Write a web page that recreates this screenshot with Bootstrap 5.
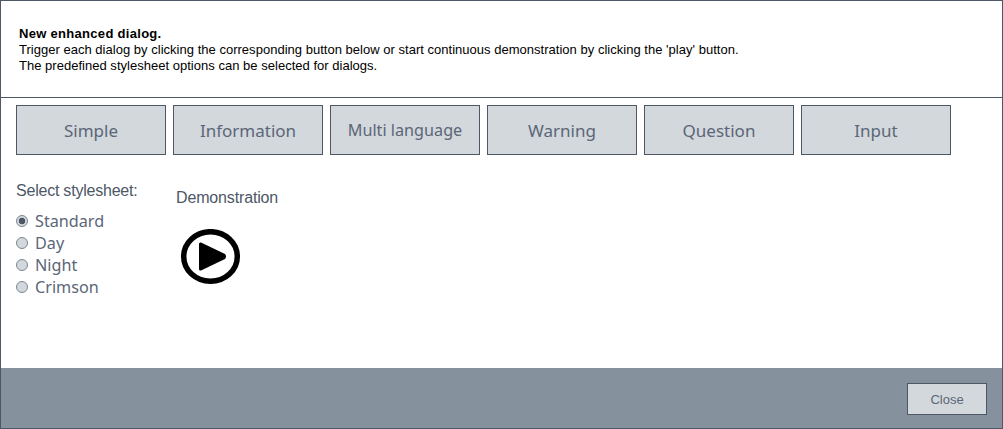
<!DOCTYPE html>
<html lang="en">
<head>
    <meta charset="UTF-8">
    <title>New enhanced dialog</title>
    <link href="https://cdn.jsdelivr.net/npm/bootstrap@5.3.0/dist/css/bootstrap.min.css" rel="stylesheet">
    <style>
        html, body { height: 100%; margin: 0; background: #fff; }
        .dlg-frame {
            width: 1003px;
            height: 429px;
            border: 1px solid #4d5766;
            font-family: "Liberation Sans", Arial, sans-serif;
            color: #4d5766;
            overflow: hidden;
        }
        .dlg-header {
            height: 97px;
            padding: 25px 18px 0;
            border-bottom: 1px solid #4d5766;
            font-size: 13px;
            line-height: 16px;
            letter-spacing: 0.02px;
            color: #000;
            flex-shrink: 0;
        }
        .dlg-title { font-weight: 700; letter-spacing: 0.3px; }
        .dlg-btns { padding: 7px 15px 0; gap: 7px; }
        .dlg-btn {
            width: 150px;
            height: 50px;
            background: #d3d8dc;
            border: 1px solid #4d5766;
            border-radius: 0;
            padding: 2px 0 0;
            font-family: "Noto Sans", sans-serif;
            font-size: 17px;
            color: #5b6678;
        }
        .dlg-btn-tight { font-size: 16.2px; padding: 0; }
        .dlg-body { padding: 0 15px; flex-grow: 1; }
        .style-col { width: 160px; padding-top: 25px; }
        .style-label { font-size: 16px; line-height: 22px; letter-spacing: -0.22px; color: #4d5766; }
        .demo-label { font-size: 16px; line-height: 22px; letter-spacing: -0.15px; color: #4d5766; }
        .style-opts { margin-top: 8px; }
        .style-opt {
            height: 22px;
            font-family: "Noto Sans", sans-serif;
            font-size: 16.2px;
            color: #5b6678;
            gap: 7px;
        }
        .radio-dot {
            width: 12px;
            height: 12px;
            border-radius: 50%;
            border: 1px solid #7b8694;
            background: #d3d8dc;
            flex-shrink: 0;
        }
        .radio-dot.on { background: radial-gradient(circle, #4d5766 0 3px, #d3d8dc 3.6px); }
        .demo-col { padding-top: 32px; }
        .demo-btn { display: block; margin: 20px 0 0 4px; }
        .dlg-footer {
            height: 60px;
            background: #85929e;
            flex-shrink: 0;
            padding: 15px 15px 0 0;
        }
        .close-btn {
            width: 80px;
            height: 32px;
            background: #d3d8dc;
            border: 1px solid #4d5766;
            border-radius: 0;
            padding: 1px 0 0;
            font-size: 13px;
            color: #5b6678;
        }
    </style>
</head>
<body>
    <div class="dlg-frame d-flex flex-column">
        <div class="dlg-header">
            <div class="dlg-title">New enhanced dialog.</div>
            <div>Trigger each dialog by clicking the corresponding button below or start continuous demonstration by clicking the 'play' button.</div>
            <div>The predefined stylesheet options can be selected for dialogs.</div>
        </div>

        <div class="dlg-btns d-flex">
            <button type="button" class="btn dlg-btn">Simple</button>
            <button type="button" class="btn dlg-btn">Information</button>
            <button type="button" class="btn dlg-btn dlg-btn-tight">Multi language</button>
            <button type="button" class="btn dlg-btn">Warning</button>
            <button type="button" class="btn dlg-btn">Question</button>
            <button type="button" class="btn dlg-btn">Input</button>
        </div>

        <div class="dlg-body d-flex">
            <div class="style-col">
                <div class="style-label">Select stylesheet:</div>
                <div class="style-opts">
                    <div class="style-opt d-flex align-items-center"><span class="radio-dot on"></span>Standard</div>
                    <div class="style-opt d-flex align-items-center"><span class="radio-dot"></span>Day</div>
                    <div class="style-opt d-flex align-items-center"><span class="radio-dot"></span>Night</div>
                    <div class="style-opt d-flex align-items-center"><span class="radio-dot"></span>Crimson</div>
                </div>
            </div>
            <div class="demo-col">
                <div class="demo-label">Demonstration</div>
                <svg class="demo-btn" width="62" height="56" viewBox="0 0 62 56" aria-label="play">
                    <ellipse cx="30.5" cy="27.5" rx="26.8" ry="24.8" fill="none" stroke="#000" stroke-width="5.5"/>
                    <path d="M21 13.5 L45 25 Q47 27.5 45 30 L21 41.5 Q19 42 19 40 L19 15 Q19 13 21 13.5 Z" fill="#000"/>
                </svg>
            </div>
        </div>

        <div class="dlg-footer d-flex justify-content-end align-items-start">
            <button type="button" class="btn close-btn">Close</button>
        </div>
    </div>
    <script src="https://cdn.jsdelivr.net/npm/bootstrap@5.3.0/dist/js/bootstrap.bundle.min.js"></script>
</body>
</html>
